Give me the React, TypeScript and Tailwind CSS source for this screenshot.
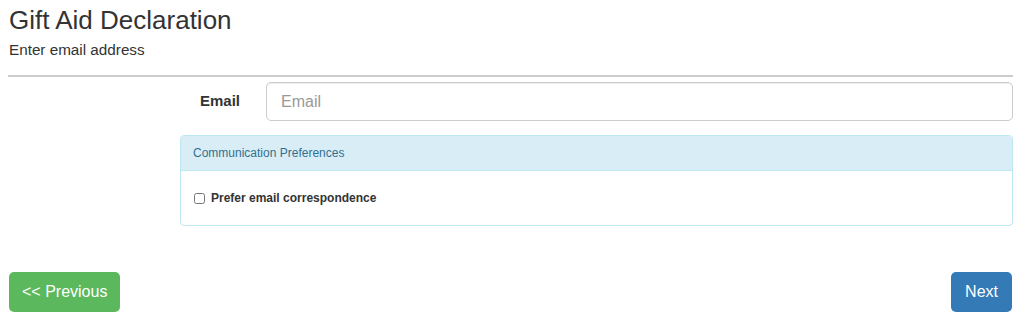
export default function App() {
  return (
    <div className="min-h-screen bg-white font-['Liberation_Sans',Arial,sans-serif] text-[#333]">
      <div className="w-[1013px] pl-2">
        <h1 className="pt-[4px] pl-px text-[26px] leading-[32px]">Gift Aid Declaration</h1>
        <p className="mt-[4px] pl-px text-[15.25px] leading-[20px]">Enter email address</p>
        <hr className="mt-[15px] border-t-2 border-[#ccc]" />

        <div className="ml-[172px] mt-[5px]">
          <div className="flex items-center">
            <label className="w-[86px] pr-[26px] text-right text-[15px] font-bold">Email</label>
            <input
              type="text"
              placeholder="Email"
              className="h-[39px] flex-1 rounded-[5px] border border-[#ccc] px-[14px] text-[16px] placeholder:text-[#999] shadow-[inset_0_1px_1px_rgba(0,0,0,0.075)] outline-none"
            />
          </div>

          <div className="mt-[14px] rounded-[4px] border border-[#bce8f1]">
            <div className="flex h-[35px] items-center border-b border-[#bce8f1] bg-[#d9edf7] px-[12px] text-[12px] text-[#31708f]">
              Communication Preferences
            </div>
            <div className="flex h-[54px] items-center px-[13px]">
              <label className="flex items-center gap-[6px] text-[12px] font-bold">
                <input type="checkbox" className="h-[11px] w-[11px]" />
                Prefer email correspondence
              </label>
            </div>
          </div>
        </div>

        <div className="mt-[46px] flex justify-between">
          <button className="ml-px h-[40px] rounded-[5px] bg-[#5cb85c] px-[13px] text-[16px] text-white">&lt;&lt; Previous</button>
          <button className="mr-px h-[40px] rounded-[5px] bg-[#337ab7] px-[14px] text-[16px] text-white">Next</button>
        </div>
      </div>
    </div>
  );
}
